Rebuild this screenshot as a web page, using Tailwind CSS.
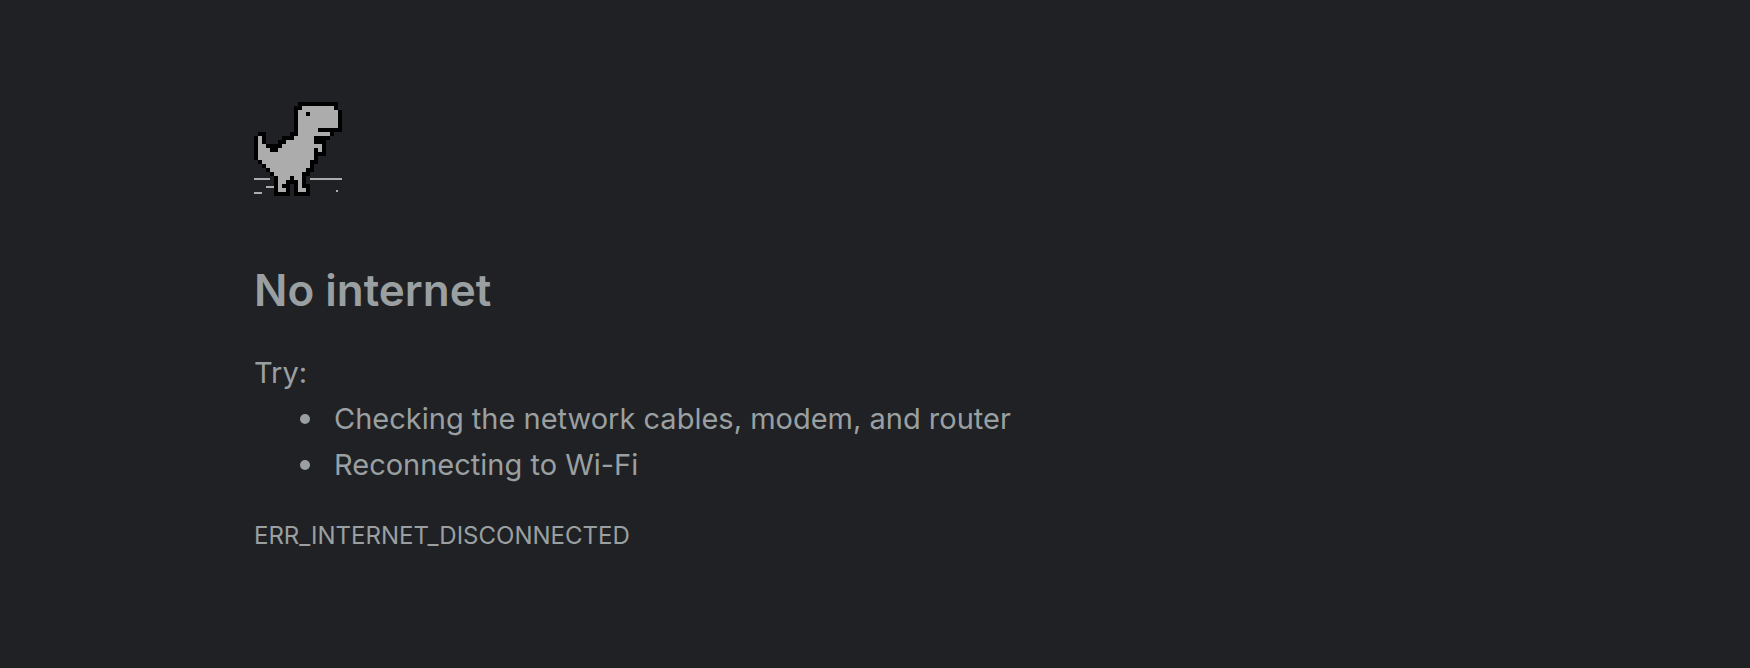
<!DOCTYPE html>
<html lang="en">
<head>
<meta charset="utf-8">
<title>No internet</title>
<script src="https://cdn.jsdelivr.net/npm/@tailwindcss/browser@4"></script>
</head>
<body class="min-h-screen bg-[#202124] font-['Inter',sans-serif] text-[#9aa0a2]">
<main class="mx-auto max-w-[1242px] pt-[102px]">
  <svg id="dino" class="block h-24 w-[88px]" viewBox="0 0 88 96" shape-rendering="crispEdges" role="img" aria-label="Dinosaur"></svg>
  <h1 class="mt-16 text-[44px] leading-[56px] font-semibold">No internet</h1>
  <p class="mt-8 text-[29px] leading-[46px]">Try:</p>
  <ul class="pl-[46px] text-[29px] leading-[46px]">
    <li class="flex items-center gap-6 before:size-[10px] before:rounded-full before:bg-current">Checking the network cables, modem, and router</li>
    <li class="flex items-center gap-6 before:size-[10px] before:rounded-full before:bg-current">Reconnecting to Wi-Fi</li>
  </ul>
  <p class="mt-[25px] text-2xl leading-[46px]">ERR_INTERNET_DISCONNECTED</p>
</main>
<script>
  // Each character is one 4px cell of the sprite: # is body, x is outline.
  const rows = [
    '..........x########xx.',
    '..........x##x#######x',
    '..........x##########x',
    '..........x##########x',
    '..........x##########x',
    '..........x#####xxxxxx',
    '.xx.......x########x..',
    'x#x.....xx#####xxxx...',
    'x#x...xx#######xxx....',
    'x##xxxx##########x....',
    'x###xx#########x#x....',
    'x##############xxx....',
    'x##############x......',
    '.x############xx......',
    '..x###########x.......',
    '...x#########xx.......',
    '....x#######xx........',
    '.....x###x##x.........',
    '.....x##xxx#x.........',
    '.....x#xx.x#xx........',
    '.....x##x.x##x........',
    '.....xxxx.xxxx........'
  ];
  // The top of the head sits half a cell above the regular grid.
  let outline = 'M44 0h40v4h-40zM40 4h8v4h-8zM80 4h4v4h-4zM40 8h4v4h-4zM84 8h4v4h-4z';
  let body = 'M48 4h32v6h-32zM44 8h40v2h-40z';
  rows.forEach((row, r) => [...row].forEach((cell, c) => {
    if (r === 0) return;
    const square = `M${c * 4} ${r * 4 + 6}h4v4h-4z`;
    if (cell === '#') body += square;
    if (cell === 'x') outline += square;
  }));
  // Shoulder cells that thicken the neck and back.
  outline += 'M36 30h4v4h-4zM28 34h4v4h-4z';
  document.getElementById('dino').innerHTML =
    '<path fill="#acacac" d="M0 76h16v2H0zM56 76h32v2H56zM12 84h8v2h-8zM0 90h8v2H0zM82 88h2v2h-2z"/>' +
    `<path d="${outline}"/><path fill="#acacac" d="${body}"/>`;
</script>
</body>
</html>
